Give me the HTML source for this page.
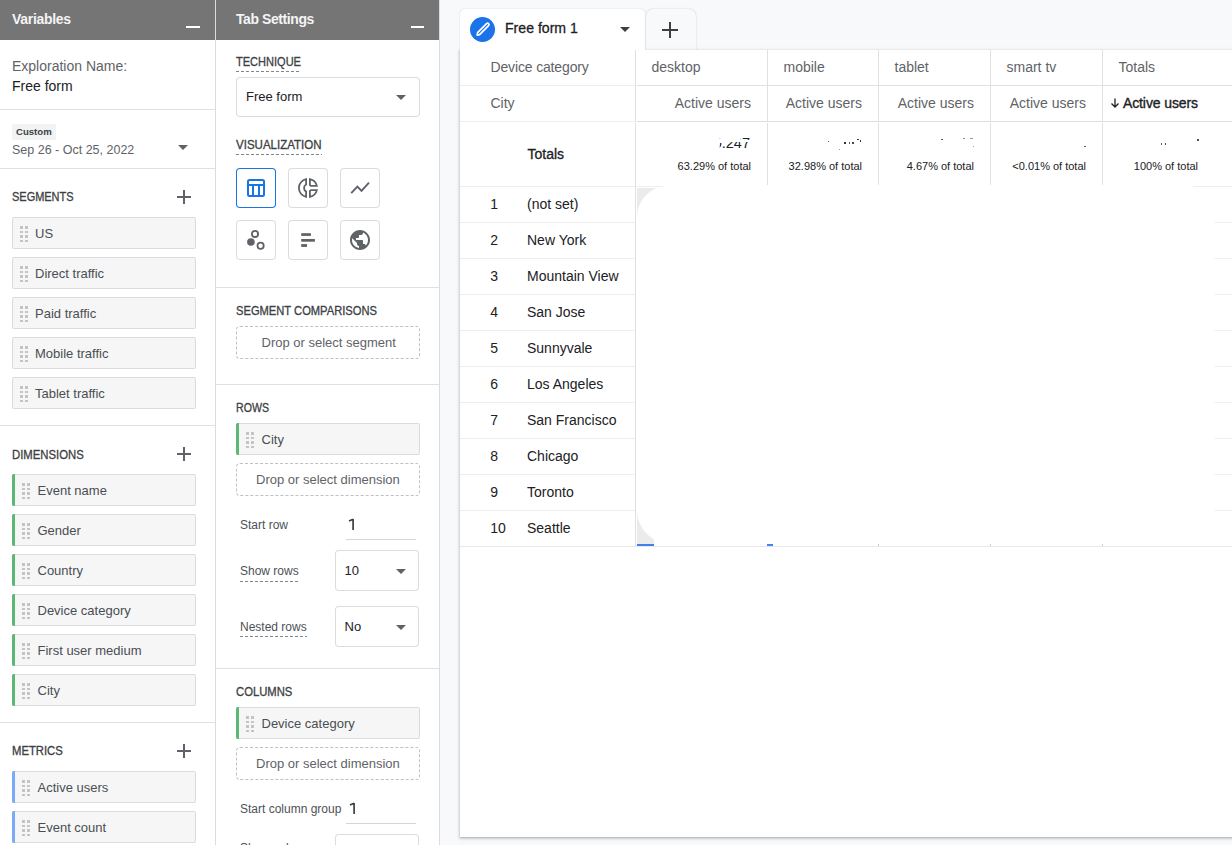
<!DOCTYPE html>
<html><head><meta charset="utf-8">
<style>
*{box-sizing:border-box;margin:0;padding:0}
html,body{width:1232px;height:845px;overflow:hidden;background:#f8f9fa;font-family:"Liberation Sans",sans-serif;color:#202124;position:relative}
.a{position:absolute}
.t{position:absolute;white-space:nowrap;line-height:1}
</style></head><body>

<div class="a" style="left:0px;top:0px;width:215px;height:845px;background:#fff;"></div>
<div class="a" style="left:0px;top:0px;width:215px;height:40px;background:#757575;"></div>
<div class="t" style="left:12px;top:12px;font-size:14px;font-weight:700;color:#f4f4f4;letter-spacing:-0.3px;">Variables</div>
<div class="a" style="left:186px;top:26px;width:14px;height:2px;background:#fff;"></div>
<div class="a" style="left:215px;top:0px;width:1px;height:845px;background:#dadce0;"></div>
<div class="t" style="left:12px;top:59px;font-size:14px;font-weight:400;color:#5f6368;">Exploration Name:</div>
<div class="t" style="left:12px;top:79px;font-size:14px;font-weight:400;color:#202124;">Free form</div>
<div class="a" style="left:0px;top:109px;width:215px;height:1px;background:#e0e0e0;"></div>
<div class="a" style="left:12px;top:124px;width:44px;height:16px;background:#f1f3f4;"></div>
<div class="t" style="left:16px;top:127px;font-size:9.6px;font-weight:700;color:#3c4043;">Custom</div>
<div class="t" style="left:12px;top:144px;font-size:12.5px;font-weight:400;color:#5f6368;">Sep 26 - Oct 25, 2022</div>
<div class="a" style="left:178px;top:145px;width:0;height:0;border-left:5.0px solid transparent;border-right:5.0px solid transparent;border-top:5px solid #5f6368"></div>
<div class="a" style="left:0px;top:168px;width:215px;height:1px;background:#e0e0e0;"></div>
<div class="t" style="left:12px;top:191px;font-size:12px;font-weight:400;color:#3c4043;transform:scaleX(0.914);transform-origin:0 0;-webkit-text-stroke:0.3px #3c4043;">SEGMENTS</div>
<div class="a" style="left:183px;top:190px;width:2px;height:14px;background:#5f6368;"></div>
<div class="a" style="left:177px;top:196px;width:14px;height:2px;background:#5f6368;"></div>
<div class="a" style="left:12px;top:217px;width:184px;height:32px;background:#f6f6f6;box-shadow:inset 0 0 0 1px #dadce0;border-radius:2px"></div>
<div class="a" style="left:20px;top:226.0px;width:2.5px;height:2.5px;background:#c4c4c4;"></div>
<div class="a" style="left:25px;top:226.0px;width:2.5px;height:2.5px;background:#c4c4c4;"></div>
<div class="a" style="left:20px;top:230.5px;width:2.5px;height:2.5px;background:#c4c4c4;"></div>
<div class="a" style="left:25px;top:230.5px;width:2.5px;height:2.5px;background:#c4c4c4;"></div>
<div class="a" style="left:20px;top:235.0px;width:2.5px;height:2.5px;background:#c4c4c4;"></div>
<div class="a" style="left:25px;top:235.0px;width:2.5px;height:2.5px;background:#c4c4c4;"></div>
<div class="a" style="left:20px;top:239.5px;width:2.5px;height:2.5px;background:#c4c4c4;"></div>
<div class="a" style="left:25px;top:239.5px;width:2.5px;height:2.5px;background:#c4c4c4;"></div>
<div class="t" style="left:35px;top:227px;font-size:13px;font-weight:400;color:#4a4e53;">US</div>
<div class="a" style="left:12px;top:257px;width:184px;height:32px;background:#f6f6f6;box-shadow:inset 0 0 0 1px #dadce0;border-radius:2px"></div>
<div class="a" style="left:20px;top:266.0px;width:2.5px;height:2.5px;background:#c4c4c4;"></div>
<div class="a" style="left:25px;top:266.0px;width:2.5px;height:2.5px;background:#c4c4c4;"></div>
<div class="a" style="left:20px;top:270.5px;width:2.5px;height:2.5px;background:#c4c4c4;"></div>
<div class="a" style="left:25px;top:270.5px;width:2.5px;height:2.5px;background:#c4c4c4;"></div>
<div class="a" style="left:20px;top:275.0px;width:2.5px;height:2.5px;background:#c4c4c4;"></div>
<div class="a" style="left:25px;top:275.0px;width:2.5px;height:2.5px;background:#c4c4c4;"></div>
<div class="a" style="left:20px;top:279.5px;width:2.5px;height:2.5px;background:#c4c4c4;"></div>
<div class="a" style="left:25px;top:279.5px;width:2.5px;height:2.5px;background:#c4c4c4;"></div>
<div class="t" style="left:35px;top:267px;font-size:13px;font-weight:400;color:#4a4e53;">Direct traffic</div>
<div class="a" style="left:12px;top:297px;width:184px;height:32px;background:#f6f6f6;box-shadow:inset 0 0 0 1px #dadce0;border-radius:2px"></div>
<div class="a" style="left:20px;top:306.0px;width:2.5px;height:2.5px;background:#c4c4c4;"></div>
<div class="a" style="left:25px;top:306.0px;width:2.5px;height:2.5px;background:#c4c4c4;"></div>
<div class="a" style="left:20px;top:310.5px;width:2.5px;height:2.5px;background:#c4c4c4;"></div>
<div class="a" style="left:25px;top:310.5px;width:2.5px;height:2.5px;background:#c4c4c4;"></div>
<div class="a" style="left:20px;top:315.0px;width:2.5px;height:2.5px;background:#c4c4c4;"></div>
<div class="a" style="left:25px;top:315.0px;width:2.5px;height:2.5px;background:#c4c4c4;"></div>
<div class="a" style="left:20px;top:319.5px;width:2.5px;height:2.5px;background:#c4c4c4;"></div>
<div class="a" style="left:25px;top:319.5px;width:2.5px;height:2.5px;background:#c4c4c4;"></div>
<div class="t" style="left:35px;top:307px;font-size:13px;font-weight:400;color:#4a4e53;">Paid traffic</div>
<div class="a" style="left:12px;top:337px;width:184px;height:32px;background:#f6f6f6;box-shadow:inset 0 0 0 1px #dadce0;border-radius:2px"></div>
<div class="a" style="left:20px;top:346.0px;width:2.5px;height:2.5px;background:#c4c4c4;"></div>
<div class="a" style="left:25px;top:346.0px;width:2.5px;height:2.5px;background:#c4c4c4;"></div>
<div class="a" style="left:20px;top:350.5px;width:2.5px;height:2.5px;background:#c4c4c4;"></div>
<div class="a" style="left:25px;top:350.5px;width:2.5px;height:2.5px;background:#c4c4c4;"></div>
<div class="a" style="left:20px;top:355.0px;width:2.5px;height:2.5px;background:#c4c4c4;"></div>
<div class="a" style="left:25px;top:355.0px;width:2.5px;height:2.5px;background:#c4c4c4;"></div>
<div class="a" style="left:20px;top:359.5px;width:2.5px;height:2.5px;background:#c4c4c4;"></div>
<div class="a" style="left:25px;top:359.5px;width:2.5px;height:2.5px;background:#c4c4c4;"></div>
<div class="t" style="left:35px;top:347px;font-size:13px;font-weight:400;color:#4a4e53;">Mobile traffic</div>
<div class="a" style="left:12px;top:377px;width:184px;height:32px;background:#f6f6f6;box-shadow:inset 0 0 0 1px #dadce0;border-radius:2px"></div>
<div class="a" style="left:20px;top:386.0px;width:2.5px;height:2.5px;background:#c4c4c4;"></div>
<div class="a" style="left:25px;top:386.0px;width:2.5px;height:2.5px;background:#c4c4c4;"></div>
<div class="a" style="left:20px;top:390.5px;width:2.5px;height:2.5px;background:#c4c4c4;"></div>
<div class="a" style="left:25px;top:390.5px;width:2.5px;height:2.5px;background:#c4c4c4;"></div>
<div class="a" style="left:20px;top:395.0px;width:2.5px;height:2.5px;background:#c4c4c4;"></div>
<div class="a" style="left:25px;top:395.0px;width:2.5px;height:2.5px;background:#c4c4c4;"></div>
<div class="a" style="left:20px;top:399.5px;width:2.5px;height:2.5px;background:#c4c4c4;"></div>
<div class="a" style="left:25px;top:399.5px;width:2.5px;height:2.5px;background:#c4c4c4;"></div>
<div class="t" style="left:35px;top:387px;font-size:13px;font-weight:400;color:#4a4e53;">Tablet traffic</div>
<div class="a" style="left:0px;top:425px;width:215px;height:1px;background:#e0e0e0;"></div>
<div class="t" style="left:12px;top:449px;font-size:12px;font-weight:400;color:#3c4043;transform:scaleX(0.943);transform-origin:0 0;-webkit-text-stroke:0.3px #3c4043;">DIMENSIONS</div>
<div class="a" style="left:183px;top:447px;width:2px;height:14px;background:#5f6368;"></div>
<div class="a" style="left:177px;top:453px;width:14px;height:2px;background:#5f6368;"></div>
<div class="a" style="left:12px;top:474px;width:184px;height:32px;background:#f6f6f6;box-shadow:inset 0 0 0 1px #dadce0;border-radius:2px"></div>
<div class="a" style="left:12px;top:474px;width:3px;height:32px;background:#5bb974;border-radius:2px 0 0 2px"></div>
<div class="a" style="left:22px;top:483.0px;width:2.5px;height:2.5px;background:#c4c4c4;"></div>
<div class="a" style="left:27px;top:483.0px;width:2.5px;height:2.5px;background:#c4c4c4;"></div>
<div class="a" style="left:22px;top:487.5px;width:2.5px;height:2.5px;background:#c4c4c4;"></div>
<div class="a" style="left:27px;top:487.5px;width:2.5px;height:2.5px;background:#c4c4c4;"></div>
<div class="a" style="left:22px;top:492.0px;width:2.5px;height:2.5px;background:#c4c4c4;"></div>
<div class="a" style="left:27px;top:492.0px;width:2.5px;height:2.5px;background:#c4c4c4;"></div>
<div class="a" style="left:22px;top:496.5px;width:2.5px;height:2.5px;background:#c4c4c4;"></div>
<div class="a" style="left:27px;top:496.5px;width:2.5px;height:2.5px;background:#c4c4c4;"></div>
<div class="t" style="left:37.5px;top:484px;font-size:13px;font-weight:400;color:#4a4e53;">Event name</div>
<div class="a" style="left:12px;top:514px;width:184px;height:32px;background:#f6f6f6;box-shadow:inset 0 0 0 1px #dadce0;border-radius:2px"></div>
<div class="a" style="left:12px;top:514px;width:3px;height:32px;background:#5bb974;border-radius:2px 0 0 2px"></div>
<div class="a" style="left:22px;top:523.0px;width:2.5px;height:2.5px;background:#c4c4c4;"></div>
<div class="a" style="left:27px;top:523.0px;width:2.5px;height:2.5px;background:#c4c4c4;"></div>
<div class="a" style="left:22px;top:527.5px;width:2.5px;height:2.5px;background:#c4c4c4;"></div>
<div class="a" style="left:27px;top:527.5px;width:2.5px;height:2.5px;background:#c4c4c4;"></div>
<div class="a" style="left:22px;top:532.0px;width:2.5px;height:2.5px;background:#c4c4c4;"></div>
<div class="a" style="left:27px;top:532.0px;width:2.5px;height:2.5px;background:#c4c4c4;"></div>
<div class="a" style="left:22px;top:536.5px;width:2.5px;height:2.5px;background:#c4c4c4;"></div>
<div class="a" style="left:27px;top:536.5px;width:2.5px;height:2.5px;background:#c4c4c4;"></div>
<div class="t" style="left:37.5px;top:524px;font-size:13px;font-weight:400;color:#4a4e53;">Gender</div>
<div class="a" style="left:12px;top:554px;width:184px;height:32px;background:#f6f6f6;box-shadow:inset 0 0 0 1px #dadce0;border-radius:2px"></div>
<div class="a" style="left:12px;top:554px;width:3px;height:32px;background:#5bb974;border-radius:2px 0 0 2px"></div>
<div class="a" style="left:22px;top:563.0px;width:2.5px;height:2.5px;background:#c4c4c4;"></div>
<div class="a" style="left:27px;top:563.0px;width:2.5px;height:2.5px;background:#c4c4c4;"></div>
<div class="a" style="left:22px;top:567.5px;width:2.5px;height:2.5px;background:#c4c4c4;"></div>
<div class="a" style="left:27px;top:567.5px;width:2.5px;height:2.5px;background:#c4c4c4;"></div>
<div class="a" style="left:22px;top:572.0px;width:2.5px;height:2.5px;background:#c4c4c4;"></div>
<div class="a" style="left:27px;top:572.0px;width:2.5px;height:2.5px;background:#c4c4c4;"></div>
<div class="a" style="left:22px;top:576.5px;width:2.5px;height:2.5px;background:#c4c4c4;"></div>
<div class="a" style="left:27px;top:576.5px;width:2.5px;height:2.5px;background:#c4c4c4;"></div>
<div class="t" style="left:37.5px;top:564px;font-size:13px;font-weight:400;color:#4a4e53;">Country</div>
<div class="a" style="left:12px;top:594px;width:184px;height:32px;background:#f6f6f6;box-shadow:inset 0 0 0 1px #dadce0;border-radius:2px"></div>
<div class="a" style="left:12px;top:594px;width:3px;height:32px;background:#5bb974;border-radius:2px 0 0 2px"></div>
<div class="a" style="left:22px;top:603.0px;width:2.5px;height:2.5px;background:#c4c4c4;"></div>
<div class="a" style="left:27px;top:603.0px;width:2.5px;height:2.5px;background:#c4c4c4;"></div>
<div class="a" style="left:22px;top:607.5px;width:2.5px;height:2.5px;background:#c4c4c4;"></div>
<div class="a" style="left:27px;top:607.5px;width:2.5px;height:2.5px;background:#c4c4c4;"></div>
<div class="a" style="left:22px;top:612.0px;width:2.5px;height:2.5px;background:#c4c4c4;"></div>
<div class="a" style="left:27px;top:612.0px;width:2.5px;height:2.5px;background:#c4c4c4;"></div>
<div class="a" style="left:22px;top:616.5px;width:2.5px;height:2.5px;background:#c4c4c4;"></div>
<div class="a" style="left:27px;top:616.5px;width:2.5px;height:2.5px;background:#c4c4c4;"></div>
<div class="t" style="left:37.5px;top:604px;font-size:13px;font-weight:400;color:#4a4e53;">Device category</div>
<div class="a" style="left:12px;top:634px;width:184px;height:32px;background:#f6f6f6;box-shadow:inset 0 0 0 1px #dadce0;border-radius:2px"></div>
<div class="a" style="left:12px;top:634px;width:3px;height:32px;background:#5bb974;border-radius:2px 0 0 2px"></div>
<div class="a" style="left:22px;top:643.0px;width:2.5px;height:2.5px;background:#c4c4c4;"></div>
<div class="a" style="left:27px;top:643.0px;width:2.5px;height:2.5px;background:#c4c4c4;"></div>
<div class="a" style="left:22px;top:647.5px;width:2.5px;height:2.5px;background:#c4c4c4;"></div>
<div class="a" style="left:27px;top:647.5px;width:2.5px;height:2.5px;background:#c4c4c4;"></div>
<div class="a" style="left:22px;top:652.0px;width:2.5px;height:2.5px;background:#c4c4c4;"></div>
<div class="a" style="left:27px;top:652.0px;width:2.5px;height:2.5px;background:#c4c4c4;"></div>
<div class="a" style="left:22px;top:656.5px;width:2.5px;height:2.5px;background:#c4c4c4;"></div>
<div class="a" style="left:27px;top:656.5px;width:2.5px;height:2.5px;background:#c4c4c4;"></div>
<div class="t" style="left:37.5px;top:644px;font-size:13px;font-weight:400;color:#4a4e53;">First user medium</div>
<div class="a" style="left:12px;top:674px;width:184px;height:32px;background:#f6f6f6;box-shadow:inset 0 0 0 1px #dadce0;border-radius:2px"></div>
<div class="a" style="left:12px;top:674px;width:3px;height:32px;background:#5bb974;border-radius:2px 0 0 2px"></div>
<div class="a" style="left:22px;top:683.0px;width:2.5px;height:2.5px;background:#c4c4c4;"></div>
<div class="a" style="left:27px;top:683.0px;width:2.5px;height:2.5px;background:#c4c4c4;"></div>
<div class="a" style="left:22px;top:687.5px;width:2.5px;height:2.5px;background:#c4c4c4;"></div>
<div class="a" style="left:27px;top:687.5px;width:2.5px;height:2.5px;background:#c4c4c4;"></div>
<div class="a" style="left:22px;top:692.0px;width:2.5px;height:2.5px;background:#c4c4c4;"></div>
<div class="a" style="left:27px;top:692.0px;width:2.5px;height:2.5px;background:#c4c4c4;"></div>
<div class="a" style="left:22px;top:696.5px;width:2.5px;height:2.5px;background:#c4c4c4;"></div>
<div class="a" style="left:27px;top:696.5px;width:2.5px;height:2.5px;background:#c4c4c4;"></div>
<div class="t" style="left:37.5px;top:684px;font-size:13px;font-weight:400;color:#4a4e53;">City</div>
<div class="a" style="left:0px;top:722px;width:215px;height:1px;background:#e0e0e0;"></div>
<div class="t" style="left:12px;top:745px;font-size:12px;font-weight:400;color:#3c4043;transform:scaleX(0.94);transform-origin:0 0;-webkit-text-stroke:0.3px #3c4043;">METRICS</div>
<div class="a" style="left:183px;top:744px;width:2px;height:14px;background:#5f6368;"></div>
<div class="a" style="left:177px;top:750px;width:14px;height:2px;background:#5f6368;"></div>
<div class="a" style="left:12px;top:771px;width:184px;height:32px;background:#f6f6f6;box-shadow:inset 0 0 0 1px #dadce0;border-radius:2px"></div>
<div class="a" style="left:12px;top:771px;width:3px;height:32px;background:#7baaf7;border-radius:2px 0 0 2px"></div>
<div class="a" style="left:22px;top:780.0px;width:2.5px;height:2.5px;background:#c4c4c4;"></div>
<div class="a" style="left:27px;top:780.0px;width:2.5px;height:2.5px;background:#c4c4c4;"></div>
<div class="a" style="left:22px;top:784.5px;width:2.5px;height:2.5px;background:#c4c4c4;"></div>
<div class="a" style="left:27px;top:784.5px;width:2.5px;height:2.5px;background:#c4c4c4;"></div>
<div class="a" style="left:22px;top:789.0px;width:2.5px;height:2.5px;background:#c4c4c4;"></div>
<div class="a" style="left:27px;top:789.0px;width:2.5px;height:2.5px;background:#c4c4c4;"></div>
<div class="a" style="left:22px;top:793.5px;width:2.5px;height:2.5px;background:#c4c4c4;"></div>
<div class="a" style="left:27px;top:793.5px;width:2.5px;height:2.5px;background:#c4c4c4;"></div>
<div class="t" style="left:37.5px;top:781px;font-size:13px;font-weight:400;color:#4a4e53;">Active users</div>
<div class="a" style="left:12px;top:811px;width:184px;height:32px;background:#f6f6f6;box-shadow:inset 0 0 0 1px #dadce0;border-radius:2px"></div>
<div class="a" style="left:12px;top:811px;width:3px;height:32px;background:#7baaf7;border-radius:2px 0 0 2px"></div>
<div class="a" style="left:22px;top:820.0px;width:2.5px;height:2.5px;background:#c4c4c4;"></div>
<div class="a" style="left:27px;top:820.0px;width:2.5px;height:2.5px;background:#c4c4c4;"></div>
<div class="a" style="left:22px;top:824.5px;width:2.5px;height:2.5px;background:#c4c4c4;"></div>
<div class="a" style="left:27px;top:824.5px;width:2.5px;height:2.5px;background:#c4c4c4;"></div>
<div class="a" style="left:22px;top:829.0px;width:2.5px;height:2.5px;background:#c4c4c4;"></div>
<div class="a" style="left:27px;top:829.0px;width:2.5px;height:2.5px;background:#c4c4c4;"></div>
<div class="a" style="left:22px;top:833.5px;width:2.5px;height:2.5px;background:#c4c4c4;"></div>
<div class="a" style="left:27px;top:833.5px;width:2.5px;height:2.5px;background:#c4c4c4;"></div>
<div class="t" style="left:37.5px;top:821px;font-size:13px;font-weight:400;color:#4a4e53;">Event count</div>
<div class="a" style="left:216px;top:0px;width:223px;height:845px;background:#fff;"></div>
<div class="a" style="left:216px;top:0px;width:223px;height:40px;background:#757575;"></div>
<div class="t" style="left:236px;top:12px;font-size:14px;font-weight:700;color:#f4f4f4;letter-spacing:-0.42px;">Tab Settings</div>
<div class="a" style="left:411px;top:26px;width:13px;height:2px;background:#fff;"></div>
<div class="a" style="left:439px;top:0px;width:1px;height:845px;background:#dadce0;"></div>
<div class="t" style="left:236px;top:56px;font-size:12px;font-weight:400;color:#3c4043;transform:scaleX(0.919);transform-origin:0 0;-webkit-text-stroke:0.3px #3c4043;">TECHNIQUE</div>
<div class="a" style="left:236px;top:71px;width:65px;height:1px;background:repeating-linear-gradient(90deg,#80868b 0 3px,transparent 3px 5px)"></div>
<div class="a" style="left:236px;top:77px;width:184px;height:40px;background:#fff;box-shadow:inset 0 0 0 1px #dadce0;border-radius:4px"></div>
<div class="t" style="left:246px;top:90px;font-size:13px;font-weight:400;color:#202124;">Free form</div>
<div class="a" style="left:396px;top:95px;width:0;height:0;border-left:5.0px solid transparent;border-right:5.0px solid transparent;border-top:5px solid #5f6368"></div>
<div class="t" style="left:236px;top:139px;font-size:12px;font-weight:400;color:#3c4043;transform:scaleX(0.96);transform-origin:0 0;-webkit-text-stroke:0.3px #3c4043;">VISUALIZATION</div>
<div class="a" style="left:236px;top:154px;width:86px;height:1px;background:repeating-linear-gradient(90deg,#80868b 0 3px,transparent 3px 5px)"></div>
<div class="a" style="left:236px;top:168px;width:40px;height:40px;border-radius:4px;box-shadow:inset 0 0 0 1px #1a73e8;background:#fff"></div>
<svg class="a" style="left:244px;top:176px" width="24" height="24" viewBox="0 0 24 24"><rect x="4" y="4" width="16" height="16" rx="1.5" fill="none" stroke="#1a73e8" stroke-width="2"/><path d="M4 9H20M9 9V20M15 9V20" stroke="#1a73e8" stroke-width="2" fill="none"/></svg>
<div class="a" style="left:288px;top:168px;width:40px;height:40px;border-radius:4px;box-shadow:inset 0 0 0 1px #dadce0;background:#fff"></div>
<svg class="a" style="left:296px;top:176px" width="24" height="24" viewBox="0 0 24 24"><path d="M10.1 3.1A9.1 9.1 0 0 0 10.1 20.9L10.1 15.5A4 4 0 0 1 10.1 8.5Z" fill="none" stroke="#5f6368" stroke-width="1.8" stroke-linejoin="miter"/><path d="M13.9 3.1L13.9 9.1L14.9 9.9L20.85 9.9A9.1 9.1 0 0 0 13.9 3.1Z" fill="none" stroke="#5f6368" stroke-width="1.8"/><path d="M13.9 20.9L13.9 14.9L14.9 14.1L20.85 14.1A9.1 9.1 0 0 1 13.9 20.9Z" fill="none" stroke="#5f6368" stroke-width="1.8"/></svg>
<div class="a" style="left:340px;top:168px;width:40px;height:40px;border-radius:4px;box-shadow:inset 0 0 0 1px #dadce0;background:#fff"></div>
<svg class="a" style="left:348px;top:176px" width="24" height="24" viewBox="0 0 24 24"><path d="M3.2 17.2L9.4 10.6L13.5 14.9L21 6.6" fill="none" stroke="#5f6368" stroke-width="1.9"/></svg>
<div class="a" style="left:236px;top:220px;width:40px;height:40px;border-radius:4px;box-shadow:inset 0 0 0 1px #dadce0;background:#fff"></div>
<svg class="a" style="left:244px;top:228px" width="24" height="24" viewBox="0 0 24 24"><circle cx="11" cy="5.9" r="3.1" fill="none" stroke="#5f6368" stroke-width="1.8"/><circle cx="6.9" cy="14" r="3.8" fill="#5f6368"/><circle cx="16.6" cy="17.7" r="3.1" fill="none" stroke="#5f6368" stroke-width="1.8"/></svg>
<div class="a" style="left:288px;top:220px;width:40px;height:40px;border-radius:4px;box-shadow:inset 0 0 0 1px #dadce0;background:#fff"></div>
<svg class="a" style="left:296px;top:228px" width="24" height="24" viewBox="0 0 24 24"><rect x="5.2" y="5.2" width="9.7" height="2.7" fill="#5f6368"/><rect x="5.2" y="11" width="13.7" height="2.7" fill="#5f6368"/><rect x="5.2" y="16.1" width="5.8" height="2.8" fill="#5f6368"/></svg>
<div class="a" style="left:340px;top:220px;width:40px;height:40px;border-radius:4px;box-shadow:inset 0 0 0 1px #dadce0;background:#fff"></div>
<svg class="a" style="left:348px;top:228px" width="24" height="24" viewBox="0 0 24 24"><path fill="#5f6368" d="M12 2C6.48 2 2 6.48 2 12s4.48 10 10 10 10-4.48 10-10S17.52 2 12 2zm-1 17.93c-3.95-.49-7-3.85-7-7.93 0-.62.08-1.21.21-1.79L9 15v1c0 1.1.9 2 2 2v1.93zm6.9-2.54c-.26-.81-1-1.39-1.9-1.39h-1v-3c0-.55-.45-1-1-1H8v-2h2c.55 0 1-.45 1-1V7h2c1.1 0 2-.9 2-2v-.41c2.93 1.19 5 4.06 5 7.41 0 2.08-.8 3.97-2.1 5.39z"/></svg>
<div class="a" style="left:216px;top:287px;width:223px;height:1px;background:#e0e0e0;"></div>
<div class="t" style="left:236px;top:305px;font-size:12px;font-weight:400;color:#3c4043;transform:scaleX(0.93);transform-origin:0 0;-webkit-text-stroke:0.3px #3c4043;">SEGMENT COMPARISONS</div>
<div class="a" style="left:236px;top:326px;width:184px;height:33px;border:1px dashed #bdc1c6;border-radius:4px"></div>
<div class="t" style="left:261.5px;top:336px;font-size:13px;font-weight:400;color:#5f6368;">Drop or select segment</div>
<div class="a" style="left:216px;top:384px;width:223px;height:1px;background:#e0e0e0;"></div>
<div class="t" style="left:236px;top:402px;font-size:12px;font-weight:400;color:#3c4043;transform:scaleX(0.885);transform-origin:0 0;-webkit-text-stroke:0.3px #3c4043;">ROWS</div>
<div class="a" style="left:236px;top:423px;width:184px;height:32px;background:#f6f6f6;box-shadow:inset 0 0 0 1px #dadce0;border-radius:2px"></div>
<div class="a" style="left:236px;top:423px;width:3px;height:32px;background:#5bb974;border-radius:2px 0 0 2px"></div>
<div class="a" style="left:246px;top:432.0px;width:2.5px;height:2.5px;background:#c4c4c4;"></div>
<div class="a" style="left:251px;top:432.0px;width:2.5px;height:2.5px;background:#c4c4c4;"></div>
<div class="a" style="left:246px;top:436.5px;width:2.5px;height:2.5px;background:#c4c4c4;"></div>
<div class="a" style="left:251px;top:436.5px;width:2.5px;height:2.5px;background:#c4c4c4;"></div>
<div class="a" style="left:246px;top:441.0px;width:2.5px;height:2.5px;background:#c4c4c4;"></div>
<div class="a" style="left:251px;top:441.0px;width:2.5px;height:2.5px;background:#c4c4c4;"></div>
<div class="a" style="left:246px;top:445.5px;width:2.5px;height:2.5px;background:#c4c4c4;"></div>
<div class="a" style="left:251px;top:445.5px;width:2.5px;height:2.5px;background:#c4c4c4;"></div>
<div class="t" style="left:261.5px;top:433px;font-size:13px;font-weight:400;color:#4a4e53;">City</div>
<div class="a" style="left:236px;top:463px;width:184px;height:33px;border:1px dashed #bdc1c6;border-radius:4px"></div>
<div class="t" style="left:256px;top:473px;font-size:13px;font-weight:400;color:#5f6368;">Drop or select dimension</div>
<div class="t" style="left:240px;top:519px;font-size:12px;font-weight:400;color:#4d5156;">Start row</div>
<svg class="a" style="left:348px;top:518px" width="8" height="13" viewBox="0 0 8 13"><path d="M5.1 1V12M1 3.1L5.1 1.2" fill="none" stroke="#3c4043" stroke-width="1.7"/></svg>
<div class="a" style="left:346px;top:539px;width:70px;height:1px;background:#d5d5d5;"></div>
<div class="t" style="left:240px;top:565px;font-size:12px;font-weight:400;color:#4d5156;">Show rows</div>
<div class="a" style="left:240px;top:581px;width:58px;height:1px;background:repeating-linear-gradient(90deg,#80868b 0 3px,transparent 3px 5px)"></div>
<div class="a" style="left:335px;top:550px;width:84px;height:41px;background:#fff;box-shadow:inset 0 0 0 1px #dadce0;border-radius:4px"></div>
<div class="t" style="left:344.5px;top:564px;font-size:13px;font-weight:400;color:#202124;">10</div>
<div class="a" style="left:396px;top:569px;width:0;height:0;border-left:5.0px solid transparent;border-right:5.0px solid transparent;border-top:5px solid #5f6368"></div>
<div class="t" style="left:240px;top:621px;font-size:12px;font-weight:400;color:#4d5156;">Nested rows</div>
<div class="a" style="left:240px;top:636px;width:67px;height:1px;background:repeating-linear-gradient(90deg,#80868b 0 3px,transparent 3px 5px)"></div>
<div class="a" style="left:335px;top:606px;width:84px;height:41px;background:#fff;box-shadow:inset 0 0 0 1px #dadce0;border-radius:4px"></div>
<div class="t" style="left:344.5px;top:620px;font-size:13px;font-weight:400;color:#202124;">No</div>
<div class="a" style="left:396px;top:625px;width:0;height:0;border-left:5.0px solid transparent;border-right:5.0px solid transparent;border-top:5px solid #5f6368"></div>
<div class="a" style="left:216px;top:668px;width:223px;height:1px;background:#e0e0e0;"></div>
<div class="t" style="left:236px;top:686px;font-size:12px;font-weight:400;color:#3c4043;transform:scaleX(0.938);transform-origin:0 0;-webkit-text-stroke:0.3px #3c4043;">COLUMNS</div>
<div class="a" style="left:236px;top:707px;width:184px;height:32px;background:#f6f6f6;box-shadow:inset 0 0 0 1px #dadce0;border-radius:2px"></div>
<div class="a" style="left:236px;top:707px;width:3px;height:32px;background:#5bb974;border-radius:2px 0 0 2px"></div>
<div class="a" style="left:246px;top:716.0px;width:2.5px;height:2.5px;background:#c4c4c4;"></div>
<div class="a" style="left:251px;top:716.0px;width:2.5px;height:2.5px;background:#c4c4c4;"></div>
<div class="a" style="left:246px;top:720.5px;width:2.5px;height:2.5px;background:#c4c4c4;"></div>
<div class="a" style="left:251px;top:720.5px;width:2.5px;height:2.5px;background:#c4c4c4;"></div>
<div class="a" style="left:246px;top:725.0px;width:2.5px;height:2.5px;background:#c4c4c4;"></div>
<div class="a" style="left:251px;top:725.0px;width:2.5px;height:2.5px;background:#c4c4c4;"></div>
<div class="a" style="left:246px;top:729.5px;width:2.5px;height:2.5px;background:#c4c4c4;"></div>
<div class="a" style="left:251px;top:729.5px;width:2.5px;height:2.5px;background:#c4c4c4;"></div>
<div class="t" style="left:261.5px;top:717px;font-size:13px;font-weight:400;color:#4a4e53;">Device category</div>
<div class="a" style="left:236px;top:747px;width:184px;height:33px;border:1px dashed #bdc1c6;border-radius:4px"></div>
<div class="t" style="left:256px;top:757px;font-size:13px;font-weight:400;color:#5f6368;">Drop or select dimension</div>
<div class="t" style="left:240px;top:803px;font-size:12px;font-weight:400;color:#4d5156;">Start column group</div>
<svg class="a" style="left:349px;top:802px" width="8" height="13" viewBox="0 0 8 13"><path d="M5.1 1V12M1 3.1L5.1 1.2" fill="none" stroke="#3c4043" stroke-width="1.7"/></svg>
<div class="a" style="left:346px;top:823px;width:70px;height:1px;background:#d5d5d5;"></div>
<div class="t" style="left:240px;top:842px;font-size:12px;font-weight:400;color:#4d5156;">Show columns</div>
<div class="a" style="left:335px;top:834px;width:84px;height:40px;background:#fff;box-shadow:inset 0 0 0 1px #dadce0;border-radius:4px"></div>
<div class="a" style="left:460px;top:9px;width:185px;height:44px;background:#fff;border-radius:5px 5px 0 0;box-shadow:0 0 1.5px rgba(60,64,67,.25)"></div>
<div class="a" style="left:645.5px;top:9px;width:50px;height:41px;background:#f8f9fa;border-radius:7px 7px 0 0;box-shadow:0 0 1.5px rgba(60,64,67,.3)"></div>
<div class="a" style="left:669px;top:22px;width:2px;height:16px;background:#3c4043;"></div>
<div class="a" style="left:662px;top:29px;width:16px;height:2px;background:#3c4043;"></div>
<div class="a" style="left:460px;top:50px;width:790px;height:787px;background:#fff;box-shadow:0 1px 2px rgba(60,64,67,.3),0 1px 3px 1px rgba(60,64,67,.15)"></div>
<div class="a" style="left:460px;top:46px;width:185px;height:8px;background:#fff;"></div>
<div class="a" style="left:470px;top:16.8px;width:25px;height:25px;border-radius:50%;background:#1a73e8"></div>
<svg class="a" style="left:470px;top:16.8px" width="25" height="25" viewBox="0 0 25 25"><path d="M7.2 18.2L7.6 15.6L16.6 6.6Q17.6 5.6 18.6 6.6Q19.6 7.6 18.6 8.6L9.6 17.6Z" fill="none" stroke="#fff" stroke-width="1.7" stroke-linejoin="round"/></svg>
<div class="t" style="left:505px;top:20px;font-size:15px;font-weight:400;color:#202124;transform:scaleX(0.94);transform-origin:0 0;-webkit-text-stroke:0.3px #202124;">Free form 1</div>
<div class="a" style="left:620px;top:27px;width:0;height:0;border-left:5.0px solid transparent;border-right:5.0px solid transparent;border-top:5px solid #3c4043"></div>
<div class="a" style="left:635px;top:50px;width:1px;height:72px;background:#e0e0e0;"></div>
<div class="a" style="left:635px;top:123px;width:1px;height:423px;background:#e0e0e0;"></div>
<div class="a" style="left:767px;top:50px;width:1px;height:72px;background:#e0e0e0;"></div>
<div class="a" style="left:767px;top:123px;width:1px;height:62px;background:#e0e0e0;"></div>
<div class="a" style="left:878px;top:50px;width:1px;height:72px;background:#e0e0e0;"></div>
<div class="a" style="left:878px;top:123px;width:1px;height:62px;background:#e0e0e0;"></div>
<div class="a" style="left:990px;top:50px;width:1px;height:72px;background:#e0e0e0;"></div>
<div class="a" style="left:990px;top:123px;width:1px;height:62px;background:#e0e0e0;"></div>
<div class="a" style="left:1102px;top:50px;width:1px;height:72px;background:#e0e0e0;"></div>
<div class="a" style="left:1102px;top:123px;width:1px;height:62px;background:#e0e0e0;"></div>
<div class="a" style="left:460px;top:85px;width:175px;height:1px;background:#eeeeee;"></div>
<div class="a" style="left:637px;top:85px;width:595px;height:1px;background:#e0e0e0;"></div>
<div class="a" style="left:460px;top:121px;width:175px;height:1px;background:#eeeeee;"></div>
<div class="a" style="left:637px;top:121px;width:595px;height:1px;background:#e0e0e0;"></div>
<div class="a" style="left:460px;top:186px;width:175px;height:1px;background:#eeeeee;"></div>
<div class="a" style="left:637px;top:186px;width:595px;height:1px;background:#eeeeee;"></div>
<div class="a" style="left:460px;top:222px;width:175px;height:1px;background:#eeeeee;"></div>
<div class="a" style="left:637px;top:222px;width:595px;height:1px;background:#f0f0f0;"></div>
<div class="a" style="left:460px;top:258px;width:175px;height:1px;background:#eeeeee;"></div>
<div class="a" style="left:637px;top:258px;width:595px;height:1px;background:#f0f0f0;"></div>
<div class="a" style="left:460px;top:294px;width:175px;height:1px;background:#eeeeee;"></div>
<div class="a" style="left:637px;top:294px;width:595px;height:1px;background:#f0f0f0;"></div>
<div class="a" style="left:460px;top:330px;width:175px;height:1px;background:#eeeeee;"></div>
<div class="a" style="left:637px;top:330px;width:595px;height:1px;background:#f0f0f0;"></div>
<div class="a" style="left:460px;top:366px;width:175px;height:1px;background:#eeeeee;"></div>
<div class="a" style="left:637px;top:366px;width:595px;height:1px;background:#f0f0f0;"></div>
<div class="a" style="left:460px;top:402px;width:175px;height:1px;background:#eeeeee;"></div>
<div class="a" style="left:637px;top:402px;width:595px;height:1px;background:#f0f0f0;"></div>
<div class="a" style="left:460px;top:438px;width:175px;height:1px;background:#eeeeee;"></div>
<div class="a" style="left:637px;top:438px;width:595px;height:1px;background:#f0f0f0;"></div>
<div class="a" style="left:460px;top:474px;width:175px;height:1px;background:#eeeeee;"></div>
<div class="a" style="left:637px;top:474px;width:595px;height:1px;background:#f0f0f0;"></div>
<div class="a" style="left:460px;top:510px;width:175px;height:1px;background:#eeeeee;"></div>
<div class="a" style="left:637px;top:510px;width:595px;height:1px;background:#f0f0f0;"></div>
<div class="a" style="left:460px;top:546px;width:772px;height:1px;background:#e8e8e8;"></div>
<div class="t" style="left:490.5px;top:60px;font-size:14px;font-weight:400;color:#5f6368;letter-spacing:-0.15px;">Device category</div>
<div class="t" style="left:490.5px;top:96px;font-size:14px;font-weight:400;color:#5f6368;">City</div>
<div class="t" style="left:527.5px;top:146.5px;font-size:14px;font-weight:400;color:#202124;-webkit-text-stroke:0.3px #202124;">Totals</div>
<div class="t" style="left:651.5px;top:60px;font-size:14px;font-weight:400;color:#5f6368;">desktop</div>
<div class="t" style="right:481px;top:96px;font-size:14px;color:#5f6368">Active users</div>
<div class="t" style="right:481px;top:161px;font-size:11px;color:#202124">63.29% of total</div>
<div class="t" style="left:783.5px;top:60px;font-size:14px;font-weight:400;color:#5f6368;">mobile</div>
<div class="t" style="right:370px;top:96px;font-size:14px;color:#5f6368">Active users</div>
<div class="t" style="right:370px;top:161px;font-size:11px;color:#202124">32.98% of total</div>
<div class="t" style="left:894.5px;top:60px;font-size:14px;font-weight:400;color:#5f6368;">tablet</div>
<div class="t" style="right:258px;top:96px;font-size:14px;color:#5f6368">Active users</div>
<div class="t" style="right:258px;top:161px;font-size:11px;color:#202124">4.67% of total</div>
<div class="t" style="left:1006.5px;top:60px;font-size:14px;font-weight:400;color:#5f6368;">smart tv</div>
<div class="t" style="right:146px;top:96px;font-size:14px;color:#5f6368">Active users</div>
<div class="t" style="right:146px;top:161px;font-size:11px;color:#202124">&lt;0.01% of total</div>
<div class="t" style="left:1118.5px;top:60px;font-size:14px;font-weight:400;color:#5f6368;">Totals</div>
<div class="t" style="right:34px;top:96px;font-size:14px;color:#202124;-webkit-text-stroke:0.35px #202124;letter-spacing:-0.1px">Active users</div>
<div class="t" style="right:34px;top:161px;font-size:11px;color:#202124">100% of total</div>
<div class="t" style="right:482px;top:136px;font-size:14.5px;color:#202124;clip-path:inset(0 0 0 6px)">0.247</div>
<div class="a" style="left:717px;top:139px;width:6px;height:4px;background:#fff;"></div>
<div class="a" style="left:722px;top:137px;width:18px;height:4.5px;background:#fff;"></div>
<div class="a" style="left:740px;top:139.5px;width:10px;height:2.5px;background:#fff;"></div>
<div class="a" style="left:827.5px;top:141px;width:1.5px;height:1px;background:#7a5a6a;"></div>
<div class="a" style="left:844px;top:142px;width:1.5px;height:2px;background:#334;"></div>
<div class="a" style="left:848.5px;top:142px;width:1.5px;height:2px;background:#556;"></div>
<div class="a" style="left:852px;top:142px;width:1.5px;height:2px;background:#445;"></div>
<div class="a" style="left:857px;top:138.5px;width:2px;height:1.2px;background:#445;"></div>
<div class="a" style="left:859.5px;top:139.5px;width:1.5px;height:2.5px;background:#334;"></div>
<div class="a" style="left:839px;top:148.5px;width:1.2px;height:1.2px;background:#99a;"></div>
<div class="a" style="left:941px;top:138.5px;width:1.5px;height:1.5px;background:#553;"></div>
<div class="a" style="left:962.5px;top:138px;width:2.5px;height:1px;background:#888;"></div>
<div class="a" style="left:970px;top:138px;width:2.5px;height:1px;background:#999;"></div>
<div class="a" style="left:973px;top:146px;width:1px;height:1px;background:#9ab;"></div>
<div class="a" style="left:1084px;top:146px;width:1.5px;height:1px;background:#557;"></div>
<div class="a" style="left:1161px;top:143px;width:1.2px;height:1.5px;background:#668;"></div>
<div class="a" style="left:1164.5px;top:142.5px;width:1.5px;height:2px;background:#446;"></div>
<div class="a" style="left:1197px;top:138.5px;width:1.5px;height:2px;background:#357;"></div>
<svg class="a" style="left:1110px;top:98px" width="10" height="10" viewBox="0 0 10 10"><path d="M5 0.5V9M1.5 5.5L5 9L8.5 5.5" fill="none" stroke="#202124" stroke-width="1.3"/></svg>
<div class="t" style="left:490.3px;top:197px;font-size:14px;font-weight:400;color:#202124;">1</div>
<div class="t" style="left:527px;top:197px;font-size:14px;font-weight:400;color:#202124;">(not set)</div>
<div class="t" style="left:490.3px;top:233px;font-size:14px;font-weight:400;color:#202124;">2</div>
<div class="t" style="left:527px;top:233px;font-size:14px;font-weight:400;color:#202124;">New York</div>
<div class="t" style="left:490.3px;top:269px;font-size:14px;font-weight:400;color:#202124;">3</div>
<div class="t" style="left:527px;top:269px;font-size:14px;font-weight:400;color:#202124;">Mountain View</div>
<div class="t" style="left:490.3px;top:305px;font-size:14px;font-weight:400;color:#202124;">4</div>
<div class="t" style="left:527px;top:305px;font-size:14px;font-weight:400;color:#202124;">San Jose</div>
<div class="t" style="left:490.3px;top:341px;font-size:14px;font-weight:400;color:#202124;">5</div>
<div class="t" style="left:527px;top:341px;font-size:14px;font-weight:400;color:#202124;">Sunnyvale</div>
<div class="t" style="left:490.3px;top:377px;font-size:14px;font-weight:400;color:#202124;">6</div>
<div class="t" style="left:527px;top:377px;font-size:14px;font-weight:400;color:#202124;">Los Angeles</div>
<div class="t" style="left:490.3px;top:413px;font-size:14px;font-weight:400;color:#202124;">7</div>
<div class="t" style="left:527px;top:413px;font-size:14px;font-weight:400;color:#202124;">San Francisco</div>
<div class="t" style="left:490.3px;top:449px;font-size:14px;font-weight:400;color:#202124;">8</div>
<div class="t" style="left:527px;top:449px;font-size:14px;font-weight:400;color:#202124;">Chicago</div>
<div class="t" style="left:490.3px;top:485px;font-size:14px;font-weight:400;color:#202124;">9</div>
<div class="t" style="left:527px;top:485px;font-size:14px;font-weight:400;color:#202124;">Toronto</div>
<div class="t" style="left:490.3px;top:521px;font-size:14px;font-weight:400;color:#202124;">10</div>
<div class="t" style="left:527px;top:521px;font-size:14px;font-weight:400;color:#202124;">Seattle</div>
<div class="a" style="left:637px;top:188px;width:23px;height:72px;background:#ebebeb;"></div>
<div class="a" style="left:637px;top:260px;width:17px;height:284px;background:#ebebeb;"></div>
<div class="a" style="left:637px;top:544px;width:17px;height:2px;background:#3f7ff0;"></div>
<div class="a" style="left:767px;top:543.5px;width:6px;height:2.5px;background:#4285f4;"></div>
<div class="a" style="left:878px;top:543px;width:1px;height:3px;background:#a8c7fa;"></div>
<div class="a" style="left:990px;top:543px;width:1px;height:3px;background:#d0d0d0;"></div>
<div class="a" style="left:1102px;top:543px;width:1px;height:3px;background:#d0d0d0;"></div>
<div class="a" style="left:637px;top:186px;width:577px;height:358px;background:#fff;border-radius:31px 26px 20px 34px / 31px 30px 20px 34px"></div>
</body></html>
